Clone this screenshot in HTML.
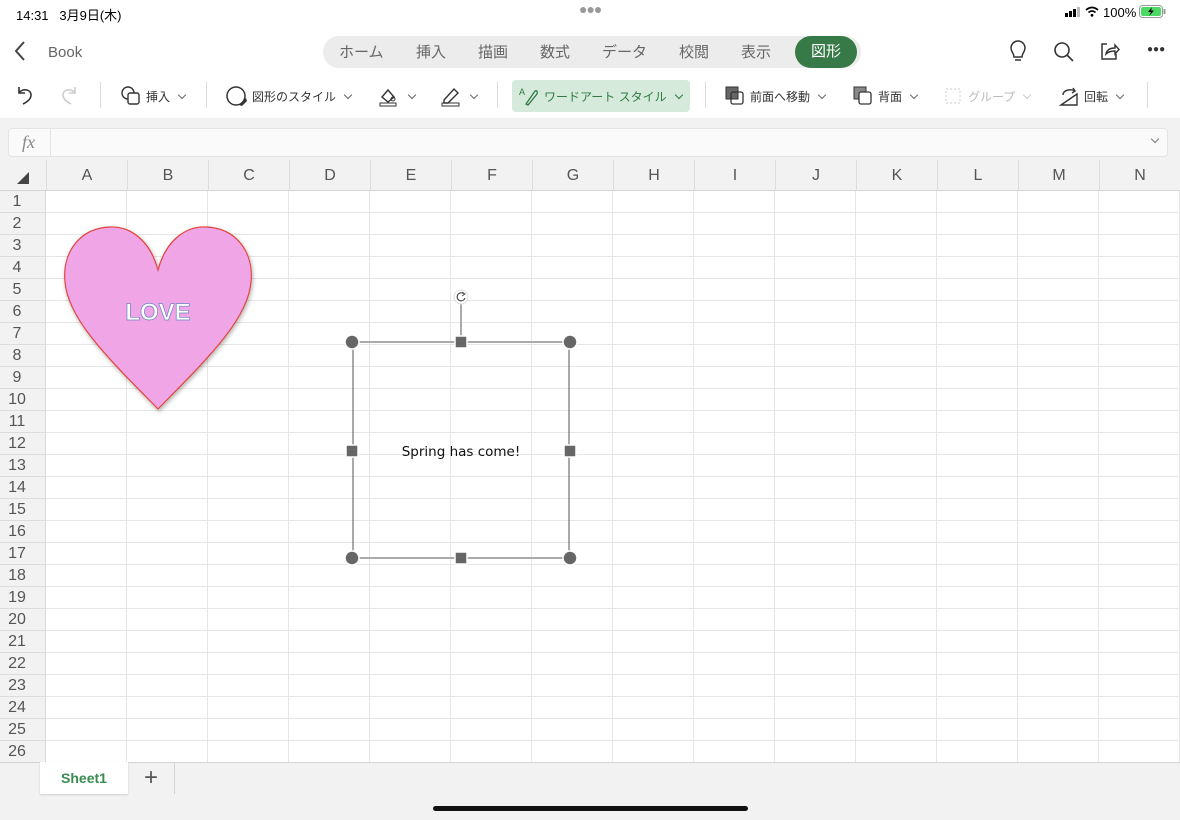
<!DOCTYPE html>
<html><head><meta charset="utf-8">
<style>
*{margin:0;padding:0;box-sizing:border-box}
body{width:1180px;height:820px;overflow:hidden;background:#f2f2f2;font-family:"Liberation Sans","Noto Sans CJK JP",sans-serif;position:relative;color:#333}
.abs{position:absolute}
.status{top:0;left:0;width:1180px;height:24px;background:#fff;font-size:13px;color:#000}
.top{top:24px;left:0;width:1180px;height:94px;background:#fff}
.tabs{left:323px;top:12px;width:538px;height:32px;border-radius:16px;background:#ececec}
.tab{position:absolute;top:17px;font-size:15px;color:#666}
.tb{position:absolute;top:61px;font-size:12px;color:#333;display:flex;align-items:center;gap:4px}
.chev{display:inline-block;width:6px;height:6px;border-right:1.2px solid #666;border-bottom:1.2px solid #666;transform:rotate(45deg);margin:-3px 4px 0 5px}
.sep{position:absolute;top:58px;width:1px;height:26px;background:#ddd}
.fx{left:8px;top:128px;width:1160px;height:29px;background:#fafafa;border:1px solid #e4e4e4;border-radius:4px}
.colh{top:160px;left:0;width:1180px;height:31px;background:#f2f2f2;border-bottom:1px solid #d4d4d4}
.ch{position:absolute;top:0;height:31px;width:81px;border-left:1px solid #dcdcdc;text-align:center;line-height:32px;font-size:16px;color:#555}
.grid{left:46px;top:191px;width:1134px;height:571px;background-color:#fff;
background-image:linear-gradient(to right,transparent 80px,#e6e6e6 80px),linear-gradient(to bottom,transparent 21px,#e6e6e6 21px);
background-size:81px 22px;}
.rowh{left:0;top:191px;width:46px;height:571px;background:#f2f2f2;border-right:1px solid #d8d8d8}
.rn{position:absolute;left:0;width:46px;height:22px;border-bottom:1px solid #dcdcdc;text-align:center;font-size:16px;line-height:22px;color:#555;padding-right:12px}
</style></head><body>
<div class="abs status">
 <span class="abs" style="left:16px;top:5px">14:31&nbsp;&nbsp;&nbsp;3月9日(木)</span>
 <span class="abs" style="left:579px;top:1px;color:#999;font-size:14px;letter-spacing:-1px">●●●</span>
 <svg class="abs" style="left:1065px;top:7px" width="16" height="10"><rect x="0" y="6" width="3" height="4" fill="#000"/><rect x="4" y="4" width="3" height="6" fill="#000"/><rect x="8" y="2" width="3" height="8" fill="#000"/><rect x="12" y="0" width="3" height="10" fill="#bbb"/></svg>
 <svg class="abs" style="left:1085px;top:6px" width="14" height="11" viewBox="0 0 14 11"><path d="M1 4 Q7 -1 13 4" stroke="#000" stroke-width="1.8" fill="none"/><path d="M3.5 6.5 Q7 3.5 10.5 6.5" stroke="#000" stroke-width="1.8" fill="none"/><circle cx="7" cy="9.3" r="1.4" fill="#000"/></svg>
 <span class="abs" style="left:1103px;top:5px">100%</span>
 <svg class="abs" style="left:1139px;top:5px" width="27" height="14"><rect x="0.5" y="0.5" width="23" height="12" rx="3" fill="none" stroke="#999"/><rect x="2" y="2" width="20" height="9" rx="2" fill="#4cd964"/><rect x="24.5" y="4" width="2" height="5" fill="#999"/><path d="M13 2 L9 7 L12 7 L10 11 L15 5.5 L12 5.5 Z" fill="#000"/></svg>
</div>
<div class="abs top">
 <svg class="abs" style="left:14px;top:16px" width="12" height="22"><path d="M10 2 L2 11 L10 20" stroke="#444" stroke-width="2" fill="none"/></svg>
 <span class="abs" style="left:48px;top:20px;font-size:15px;color:#666">Book</span>
 <div class="abs tabs"></div>
 <span class="tab" style="left:339px">ホーム</span>
 <span class="tab" style="left:416px">挿入</span>
 <span class="tab" style="left:478px">描画</span>
 <span class="tab" style="left:540px">数式</span>
 <span class="tab" style="left:602px">データ</span>
 <span class="tab" style="left:679px">校閲</span>
 <span class="tab" style="left:741px">表示</span>
 <div class="abs" style="left:795px;top:12px;width:62px;height:32px;border-radius:16px;background:#377a47;color:#fff;font-size:15px;text-align:center;line-height:32px">図形</div>
 <svg class="abs" style="left:1008px;top:16px" width="20" height="24"><path d="M6 17 C6 13 3 12 3 8 A7 7 0 0 1 17 8 C17 12 14 13 14 17 Z M7 20 H13" stroke="#333" stroke-width="1.5" fill="none"/></svg>
 <svg class="abs" style="left:1053px;top:17px" width="22" height="22"><circle cx="9" cy="9" r="7" stroke="#333" stroke-width="1.6" fill="none"/><path d="M14 14 L20 20" stroke="#333" stroke-width="1.6"/></svg>
 <svg class="abs" style="left:1099px;top:16px" width="22" height="22"><path d="M8 4 H3 V19 H17 V14" stroke="#333" stroke-width="1.5" fill="none"/><path d="M7 14 C8 9 12 8 16 8 V5 L20 9.5 L16 14 V11 C12 11 9 12 7 14 Z" stroke="#333" stroke-width="1.4" fill="none"/></svg>
 <span class="abs" style="left:1147px;top:20px;font-size:10px;color:#333;letter-spacing:0">●●●</span>
 <svg class="abs" style="left:14px;top:60px" width="22" height="22"><path d="M5 3 V9 H11" stroke="#333" stroke-width="1.6" fill="none"/><path d="M5 9 C8 4 17 5 17 11 C17 15 13 18 9 20" stroke="#333" stroke-width="1.6" fill="none"/></svg>
 <svg class="abs" style="left:58px;top:60px" width="22" height="22"><path d="M17 3 V9 H11" stroke="#ccc" stroke-width="1.6" fill="none"/><path d="M17 9 C14 4 5 5 5 11 C5 15 9 18 13 20" stroke="#ccc" stroke-width="1.6" fill="none"/></svg>
 <div class="sep" style="left:100px"></div>
 <div class="tb" style="left:120px"><svg width="22" height="22"><circle cx="8" cy="8" r="6" stroke="#333" stroke-width="1.4" fill="none"/><rect x="8" y="8" width="11" height="11" rx="2" fill="#fff" stroke="#333" stroke-width="1.4"/></svg>挿入<i class="chev"></i></div>
 <div class="sep" style="left:206px"></div>
 <div class="tb" style="left:226px"><svg width="22" height="22"><circle cx="10" cy="11" r="9" stroke="#333" stroke-width="1.5" fill="none"/><path d="M13 20 L20 13 L21 16 L16 21 Z" fill="#333"/></svg>図形のスタイル<i class="chev"></i></div>
 <div class="tb" style="left:378px"><svg width="22" height="22"><path d="M4 12 L10 5 L16 12 L10 17 Z" stroke="#333" stroke-width="1.4" fill="none"/><circle cx="15" cy="14" r="2" stroke="#333" fill="none"/><rect x="2" y="18" width="16" height="3" fill="none" stroke="#333"/></svg><i class="chev"></i></div>
 <div class="tb" style="left:440px"><svg width="22" height="22"><path d="M4 15 L14 4 L18 8 L8 18 H4 Z" stroke="#333" stroke-width="1.4" fill="none"/><rect x="2" y="18" width="17" height="3" fill="none" stroke="#333"/></svg><i class="chev"></i></div>
 <div class="sep" style="left:497px"></div>
 <div class="abs" style="left:512px;top:56px;width:178px;height:32px;background:#d5eadb;border-radius:4px"></div>
 <div class="tb" style="left:518px;color:#2e7a42"><svg width="22" height="22"><text x="1" y="10" font-size="9" fill="#2e7a42" font-family="Liberation Sans">A</text><path d="M8 19 L17 6 Q20 5 19 9 L10 20 Z" stroke="#2e7a42" stroke-width="1.3" fill="none"/></svg>ワードアート スタイル<i class="chev" style="border-color:#2e7a42"></i></div>
 <div class="sep" style="left:705px"></div>
 <div class="tb" style="left:724px"><svg width="22" height="22"><rect x="2" y="2" width="12" height="12" fill="#666" stroke="#333"/><rect x="7" y="7" width="12" height="12" rx="2" fill="none" stroke="#333" stroke-width="1.3"/></svg>前面へ移動<i class="chev"></i></div>
 <div class="tb" style="left:852px"><svg width="22" height="22"><rect x="2" y="2" width="12" height="12" fill="#888" stroke="#333"/><rect x="7" y="7" width="12" height="12" rx="2" fill="#fff" stroke="#333" stroke-width="1.3"/></svg>背面<i class="chev"></i></div>
 <div class="tb" style="left:942px;color:#bbb"><svg width="22" height="22"><rect x="4" y="4" width="14" height="14" fill="none" stroke="#ccc" stroke-dasharray="2 2"/></svg>グループ<i class="chev" style="border-color:#ccc"></i></div>
 <div class="tb" style="left:1058px"><svg width="22" height="22"><path d="M3 20 L19 9 V20 Z" stroke="#333" stroke-width="1.4" fill="none"/><path d="M5 10 C5 4 15 4 17 6 M15 3 L17 6 L14 8" stroke="#333" stroke-width="1.4" fill="none"/></svg>回転<i class="chev"></i></div>
 <div class="sep" style="left:1147px"></div>
</div>
<div class="abs fx"><span class="abs" style="left:13px;top:3px;font-family:'Liberation Serif',serif;font-style:italic;font-size:18px;color:#888">fx</span><div class="abs" style="left:41px;top:0;width:1px;height:27px;background:#e4e4e4"></div><i class="chev abs" style="left:1138px;top:10px;border-color:#777"></i></div>
<div class="abs colh">
 <svg class="abs" style="left:17px;top:12px" width="12" height="12"><path d="M12 0 V12 H0 Z" fill="#444"/></svg>
 <div class="ch" style="left:46px">A</div><div class="ch" style="left:127px">B</div><div class="ch" style="left:208px">C</div><div class="ch" style="left:289px">D</div><div class="ch" style="left:370px">E</div><div class="ch" style="left:451px">F</div><div class="ch" style="left:532px">G</div><div class="ch" style="left:613px">H</div><div class="ch" style="left:694px">I</div><div class="ch" style="left:775px">J</div><div class="ch" style="left:856px">K</div><div class="ch" style="left:937px">L</div><div class="ch" style="left:1018px">M</div><div class="ch" style="left:1099px">N</div>
</div>
<div class="abs grid"></div>
<div class="abs rowh">
<div class="rn" style="top:0">1</div><div class="rn" style="top:22px">2</div><div class="rn" style="top:44px">3</div><div class="rn" style="top:66px">4</div><div class="rn" style="top:88px">5</div><div class="rn" style="top:110px">6</div><div class="rn" style="top:132px">7</div><div class="rn" style="top:154px">8</div><div class="rn" style="top:176px">9</div><div class="rn" style="top:198px">10</div><div class="rn" style="top:220px">11</div><div class="rn" style="top:242px">12</div><div class="rn" style="top:264px">13</div><div class="rn" style="top:286px">14</div><div class="rn" style="top:308px">15</div><div class="rn" style="top:330px">16</div><div class="rn" style="top:352px">17</div><div class="rn" style="top:374px">18</div><div class="rn" style="top:396px">19</div><div class="rn" style="top:418px">20</div><div class="rn" style="top:440px">21</div><div class="rn" style="top:462px">22</div><div class="rn" style="top:484px">23</div><div class="rn" style="top:506px">24</div><div class="rn" style="top:528px">25</div><div class="rn" style="top:550px">26</div>
</div>
<svg class="abs" style="left:0;top:0" width="1180" height="820">
 <defs><filter id="sh"><feDropShadow dx="1" dy="2" stdDeviation="2" flood-color="#000" flood-opacity="0.3"/></filter></defs>
 <path d="M158 270 C150 240 130 226 110 227 C80 228 62 252 65 282 C68 320 110 360 158 409 C206 360 248 320 251 282 C254 252 236 228 206 227 C186 226 166 240 158 270 Z" fill="#f0a5e6" stroke="#e0443c" stroke-width="1.2" filter="url(#sh)"/>
 <text x="158" y="320" text-anchor="middle" font-family="Liberation Sans" font-weight="bold" font-size="24" fill="#fff" stroke="#6a7fc0" stroke-width="0.7">LOVE</text>
 <line x1="352" y1="342" x2="570" y2="342" stroke="#aaa" stroke-width="2"/>
 <line x1="352" y1="558" x2="570" y2="558" stroke="#aaa" stroke-width="2"/>
 <line x1="353" y1="342" x2="353" y2="558" stroke="#555" stroke-width="1"/>
 <line x1="569" y1="342" x2="569" y2="558" stroke="#555" stroke-width="1"/>
 <line x1="461" y1="304" x2="461" y2="342" stroke="#aaa" stroke-width="2"/>
 <circle cx="461" cy="297" r="7" fill="#fff" stroke="#ddd"/>
 <path d="M464 294 A4 4 0 1 0 465 298" stroke="#555" stroke-width="1.2" fill="none"/><path d="M462 292 L465 294 L462 296" stroke="#555" stroke-width="1" fill="none"/>
 <g fill="#666" stroke="#fff" stroke-width="1.5">
  <circle cx="352" cy="342" r="7"/><circle cx="570" cy="342" r="7"/><circle cx="352" cy="558" r="7"/><circle cx="570" cy="558" r="7"/>
  <rect x="455" y="336" width="12" height="12"/><rect x="455" y="552" width="12" height="12"/><rect x="346" y="445" width="12" height="12"/><rect x="564" y="445" width="12" height="12"/>
 </g>
 <text x="461" y="456" text-anchor="middle" font-family="DejaVu Sans,Liberation Sans" font-size="13.5" fill="#111">Spring has come!</text>
</svg>
<div class="abs" style="left:0;top:762px;width:1180px;height:1px;background:#d4d4d4"></div>
<div class="abs" style="left:40px;top:762px;width:88px;height:32px;background:#fff;box-shadow:0 1px 2px rgba(0,0,0,.15);color:#3a8a52;font-size:14px;font-weight:bold;text-align:center;line-height:32px">Sheet1</div>
<span class="abs" style="left:144px;top:764px;font-size:24px;color:#555;font-weight:300">+</span>
<div class="abs" style="left:174px;top:762px;width:1px;height:32px;background:#d4d4d4"></div>
<div class="abs" style="left:433px;top:806px;width:315px;height:5px;border-radius:3px;background:#111"></div>
</body></html>
